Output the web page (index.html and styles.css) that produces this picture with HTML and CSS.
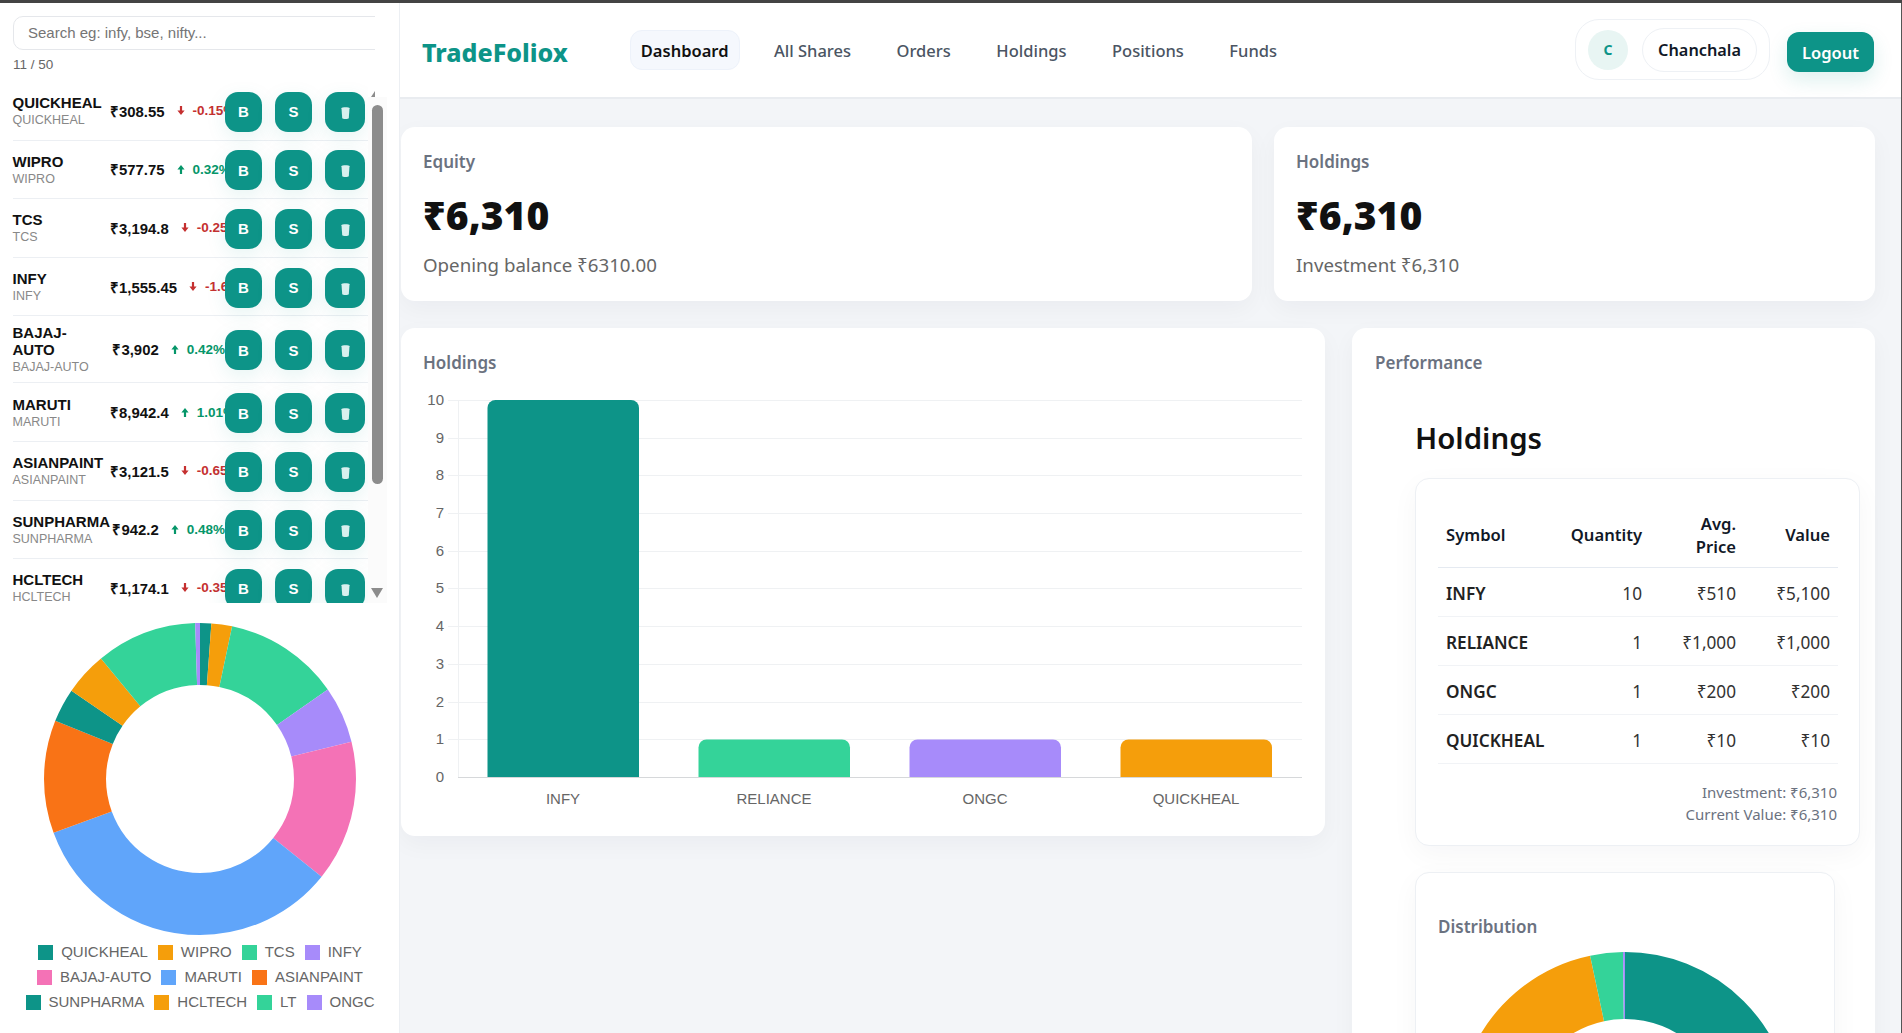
FILE: index.html
```html
<!DOCTYPE html>
<html lang="en">
<head>
    <meta charset="UTF-8">
    <meta name="viewport" content="width=device-width, initial-scale=1.0">
    <title>TradeFoliox</title>
    <link rel="stylesheet" href="styles.css">
</head>
<body>
    <div class="app">
        <aside class="sidebar">
            <div class="search-wrap">
                <input class="search" type="text" placeholder="Search eg: infy, bse, nifty...">
            </div>
            <div class="count">11 / 50</div>

            <div class="watchlist-wrap">
                <div class="watchlist">
                    <div class="stock">
                        <div class="stock-name"><div class="symbol">QUICKHEAL</div><div class="exchange">QUICKHEAL</div></div>
                        <div class="quote"><span class="price">₹308.55</span><span class="change down"><svg class="arrow" viewBox="0 0 8 9"><path d="M4 9 0.4 4.6H2.9V0H5.1V4.6H7.6Z"/></svg>-0.15%</span></div>
                        <div class="actions"><button class="btn">B</button><button class="btn">S</button><button class="btn btn-icon"><svg class="trash" viewBox="0 0 9 13"><path d="M0.5 2.2C0.5 0.8 8.5 0.8 8.5 2.2L7.8 12C7.7 13.3 1.3 13.3 1.2 12Z"/></svg></button></div>
                    </div>
                    <div class="stock">
                        <div class="stock-name"><div class="symbol">WIPRO</div><div class="exchange">WIPRO</div></div>
                        <div class="quote"><span class="price">₹577.75</span><span class="change up"><svg class="arrow" viewBox="0 0 8 9"><path d="M4 0 7.6 4.4H5.1V9H2.9V4.4H0.4Z"/></svg>0.32%</span></div>
                        <div class="actions"><button class="btn">B</button><button class="btn">S</button><button class="btn btn-icon"><svg class="trash" viewBox="0 0 9 13"><path d="M0.5 2.2C0.5 0.8 8.5 0.8 8.5 2.2L7.8 12C7.7 13.3 1.3 13.3 1.2 12Z"/></svg></button></div>
                    </div>
                    <div class="stock">
                        <div class="stock-name"><div class="symbol">TCS</div><div class="exchange">TCS</div></div>
                        <div class="quote"><span class="price">₹3,194.8</span><span class="change down"><svg class="arrow" viewBox="0 0 8 9"><path d="M4 9 0.4 4.6H2.9V0H5.1V4.6H7.6Z"/></svg>-0.25%</span></div>
                        <div class="actions"><button class="btn">B</button><button class="btn">S</button><button class="btn btn-icon"><svg class="trash" viewBox="0 0 9 13"><path d="M0.5 2.2C0.5 0.8 8.5 0.8 8.5 2.2L7.8 12C7.7 13.3 1.3 13.3 1.2 12Z"/></svg></button></div>
                    </div>
                    <div class="stock">
                        <div class="stock-name"><div class="symbol">INFY</div><div class="exchange">INFY</div></div>
                        <div class="quote"><span class="price">₹1,555.45</span><span class="change down"><svg class="arrow" viewBox="0 0 8 9"><path d="M4 9 0.4 4.6H2.9V0H5.1V4.6H7.6Z"/></svg>-1.65%</span></div>
                        <div class="actions"><button class="btn">B</button><button class="btn">S</button><button class="btn btn-icon"><svg class="trash" viewBox="0 0 9 13"><path d="M0.5 2.2C0.5 0.8 8.5 0.8 8.5 2.2L7.8 12C7.7 13.3 1.3 13.3 1.2 12Z"/></svg></button></div>
                    </div>
                    <div class="stock stock-wrapped">
                        <div class="stock-name"><div class="symbol">BAJAJ-AUTO</div><div class="exchange">BAJAJ-AUTO</div></div>
                        <div class="quote"><span class="price">₹3,902</span><span class="change up"><svg class="arrow" viewBox="0 0 8 9"><path d="M4 0 7.6 4.4H5.1V9H2.9V4.4H0.4Z"/></svg>0.42%</span></div>
                        <div class="actions"><button class="btn">B</button><button class="btn">S</button><button class="btn btn-icon"><svg class="trash" viewBox="0 0 9 13"><path d="M0.5 2.2C0.5 0.8 8.5 0.8 8.5 2.2L7.8 12C7.7 13.3 1.3 13.3 1.2 12Z"/></svg></button></div>
                    </div>
                    <div class="stock">
                        <div class="stock-name"><div class="symbol">MARUTI</div><div class="exchange">MARUTI</div></div>
                        <div class="quote"><span class="price">₹8,942.4</span><span class="change up"><svg class="arrow" viewBox="0 0 8 9"><path d="M4 0 7.6 4.4H5.1V9H2.9V4.4H0.4Z"/></svg>1.01%</span></div>
                        <div class="actions"><button class="btn">B</button><button class="btn">S</button><button class="btn btn-icon"><svg class="trash" viewBox="0 0 9 13"><path d="M0.5 2.2C0.5 0.8 8.5 0.8 8.5 2.2L7.8 12C7.7 13.3 1.3 13.3 1.2 12Z"/></svg></button></div>
                    </div>
                    <div class="stock">
                        <div class="stock-name"><div class="symbol">ASIANPAINT</div><div class="exchange">ASIANPAINT</div></div>
                        <div class="quote"><span class="price">₹3,121.5</span><span class="change down"><svg class="arrow" viewBox="0 0 8 9"><path d="M4 9 0.4 4.6H2.9V0H5.1V4.6H7.6Z"/></svg>-0.65%</span></div>
                        <div class="actions"><button class="btn">B</button><button class="btn">S</button><button class="btn btn-icon"><svg class="trash" viewBox="0 0 9 13"><path d="M0.5 2.2C0.5 0.8 8.5 0.8 8.5 2.2L7.8 12C7.7 13.3 1.3 13.3 1.2 12Z"/></svg></button></div>
                    </div>
                    <div class="stock">
                        <div class="stock-name"><div class="symbol">SUNPHARMA</div><div class="exchange">SUNPHARMA</div></div>
                        <div class="quote"><span class="price">₹942.2</span><span class="change up"><svg class="arrow" viewBox="0 0 8 9"><path d="M4 0 7.6 4.4H5.1V9H2.9V4.4H0.4Z"/></svg>0.48%</span></div>
                        <div class="actions"><button class="btn">B</button><button class="btn">S</button><button class="btn btn-icon"><svg class="trash" viewBox="0 0 9 13"><path d="M0.5 2.2C0.5 0.8 8.5 0.8 8.5 2.2L7.8 12C7.7 13.3 1.3 13.3 1.2 12Z"/></svg></button></div>
                    </div>
                    <div class="stock">
                        <div class="stock-name"><div class="symbol">HCLTECH</div><div class="exchange">HCLTECH</div></div>
                        <div class="quote"><span class="price">₹1,174.1</span><span class="change down"><svg class="arrow" viewBox="0 0 8 9"><path d="M4 9 0.4 4.6H2.9V0H5.1V4.6H7.6Z"/></svg>-0.35%</span></div>
                        <div class="actions"><button class="btn">B</button><button class="btn">S</button><button class="btn btn-icon"><svg class="trash" viewBox="0 0 9 13"><path d="M0.5 2.2C0.5 0.8 8.5 0.8 8.5 2.2L7.8 12C7.7 13.3 1.3 13.3 1.2 12Z"/></svg></button></div>
                    </div>
                </div>
                <div class="scrollbar">
                    <span class="scroll-up"></span>
                    <span class="scroll-thumb"></span>
                    <span class="scroll-down"></span>
                </div>
            </div>

            <div class="side-chart">
                <svg class="donut-side" viewBox="0 0 312 312">
                    <g fill="none" stroke-width="62" transform="rotate(-90 156 156)">
                        <circle cx="156" cy="156" r="125" pathLength="360" stroke="#0d9488" stroke-dasharray="4.2 360"/>
                        <circle cx="156" cy="156" r="125" pathLength="360" stroke="#f59e0b" stroke-dasharray="7.7 360" stroke-dashoffset="-4.2"/>
                        <circle cx="156" cy="156" r="125" pathLength="360" stroke="#34d399" stroke-dasharray="43.1 360" stroke-dashoffset="-11.9"/>
                        <circle cx="156" cy="156" r="125" pathLength="360" stroke="#a78bfa" stroke-dasharray="21.2 360" stroke-dashoffset="-55"/>
                        <circle cx="156" cy="156" r="125" pathLength="360" stroke="#f472b6" stroke-dasharray="52.6 360" stroke-dashoffset="-76.2"/>
                        <circle cx="156" cy="156" r="125" pathLength="360" stroke="#60a5fa" stroke-dasharray="121 360" stroke-dashoffset="-128.8"/>
                        <circle cx="156" cy="156" r="125" pathLength="360" stroke="#f97316" stroke-dasharray="42.1 360" stroke-dashoffset="-249.8"/>
                        <circle cx="156" cy="156" r="125" pathLength="360" stroke="#0d9488" stroke-dasharray="12.6 360" stroke-dashoffset="-291.9"/>
                        <circle cx="156" cy="156" r="125" pathLength="360" stroke="#f59e0b" stroke-dasharray="16.1 360" stroke-dashoffset="-304.5"/>
                        <circle cx="156" cy="156" r="125" pathLength="360" stroke="#34d399" stroke-dasharray="37.6 360" stroke-dashoffset="-320.6"/>
                        <circle cx="156" cy="156" r="125" pathLength="360" stroke="#a78bfa" stroke-dasharray="1.8 360" stroke-dashoffset="-358.2"/>
                    </g>
                </svg>
                <div class="legend">
                    <span class="legend-item"><i class="swatch teal"></i>QUICKHEAL</span>
                    <span class="legend-item"><i class="swatch amber"></i>WIPRO</span>
                    <span class="legend-item"><i class="swatch green"></i>TCS</span>
                    <span class="legend-item"><i class="swatch violet"></i>INFY</span>
                    <span class="legend-item"><i class="swatch pink"></i>BAJAJ-AUTO</span>
                    <span class="legend-item"><i class="swatch blue"></i>MARUTI</span>
                    <span class="legend-item"><i class="swatch orange"></i>ASIANPAINT</span>
                    <span class="legend-item"><i class="swatch teal"></i>SUNPHARMA</span>
                    <span class="legend-item"><i class="swatch amber"></i>HCLTECH</span>
                    <span class="legend-item"><i class="swatch green"></i>LT</span>
                    <span class="legend-item"><i class="swatch violet"></i>ONGC</span>
                </div>
            </div>
        </aside>

        <div class="content">
            <header class="topbar">
                <div class="logo">TradeFoliox</div>
                <nav class="nav">
                    <a class="nav-link active">Dashboard</a>
                    <a class="nav-link">All Shares</a>
                    <a class="nav-link">Orders</a>
                    <a class="nav-link">Holdings</a>
                    <a class="nav-link">Positions</a>
                    <a class="nav-link">Funds</a>
                </nav>
                <div class="user">
                    <div class="user-pill">
                        <div class="avatar">C</div>
                        <div class="user-name">Chanchala</div>
                    </div>
                    <button class="logout">Logout</button>
                </div>
            </header>

            <main class="main">
                <div class="summary-row">
                    <section class="card stat">
                        <div class="card-title">Equity</div>
                        <div class="stat-value">₹6,310</div>
                        <div class="stat-sub">Opening balance ₹6310.00</div>
                    </section>
                    <section class="card stat">
                        <div class="card-title">Holdings</div>
                        <div class="stat-value">₹6,310</div>
                        <div class="stat-sub">Investment ₹6,310</div>
                    </section>
                </div>

                <div class="detail-row">
                    <section class="card chart-card">
                        <div class="card-title">Holdings</div>
                        <svg class="bar-chart" viewBox="0 0 877 422">
                            <g class="grid">
                                <line x1="23" x2="877" y1="8.5" y2="8.5"/>
                                <line x1="23" x2="877" y1="46.5" y2="46.5"/>
                                <line x1="23" x2="877" y1="83.5" y2="83.5"/>
                                <line x1="23" x2="877" y1="121.5" y2="121.5"/>
                                <line x1="23" x2="877" y1="159.5" y2="159.5"/>
                                <line x1="23" x2="877" y1="196.5" y2="196.5"/>
                                <line x1="23" x2="877" y1="234.5" y2="234.5"/>
                                <line x1="23" x2="877" y1="272.5" y2="272.5"/>
                                <line x1="23" x2="877" y1="310.5" y2="310.5"/>
                                <line x1="23" x2="877" y1="347.5" y2="347.5"/>
                                <line x1="33.5" x2="33.5" y1="8" y2="385"/>
                            </g>
                            <g class="axis-label">
                                <text x="19" y="12.5" text-anchor="end">10</text>
                                <text x="19" y="50.5" text-anchor="end">9</text>
                                <text x="19" y="87.5" text-anchor="end">8</text>
                                <text x="19" y="125.5" text-anchor="end">7</text>
                                <text x="19" y="163.5" text-anchor="end">6</text>
                                <text x="19" y="200.5" text-anchor="end">5</text>
                                <text x="19" y="238.5" text-anchor="end">4</text>
                                <text x="19" y="276.5" text-anchor="end">3</text>
                                <text x="19" y="314.5" text-anchor="end">2</text>
                                <text x="19" y="351.5" text-anchor="end">1</text>
                                <text x="19" y="389.5" text-anchor="end">0</text>
                            </g>
                            <path fill="#0d9488" d="M62.5 385V16a8 8 0 0 1 8-8H206a8 8 0 0 1 8 8V385Z"/>
                            <path fill="#34d399" d="M273.5 385V355.5a8 8 0 0 1 8-8H417a8 8 0 0 1 8 8V385Z"/>
                            <path fill="#a78bfa" d="M484.5 385V355.5a8 8 0 0 1 8-8H628a8 8 0 0 1 8 8V385Z"/>
                            <path fill="#f59e0b" d="M695.5 385V355.5a8 8 0 0 1 8-8H839a8 8 0 0 1 8 8V385Z"/>
                            <line class="baseline" x1="33" x2="877" y1="385.5" y2="385.5"/>
                            <g class="axis-label">
                                <text x="138" y="412" text-anchor="middle">INFY</text>
                                <text x="349" y="412" text-anchor="middle">RELIANCE</text>
                                <text x="560" y="412" text-anchor="middle">ONGC</text>
                                <text x="771" y="412" text-anchor="middle">QUICKHEAL</text>
                            </g>
                        </svg>
                    </section>

                    <section class="card perf-card">
                        <div class="card-title">Performance</div>
                        <h2 class="perf-heading">Holdings</h2>
                        <div class="inner-card table-card">
                            <table class="holdings-table">
                                <thead>
                                    <tr>
                                        <th class="col-symbol">Symbol</th>
                                        <th class="col-qty">Quantity</th>
                                        <th class="col-price">Avg.<br>Price</th>
                                        <th class="col-price">Value</th>
                                    </tr>
                                </thead>
                                <tbody>
                                    <tr><td>INFY</td><td>10</td><td>₹510</td><td>₹5,100</td></tr>
                                    <tr><td>RELIANCE</td><td>1</td><td>₹1,000</td><td>₹1,000</td></tr>
                                    <tr><td>ONGC</td><td>1</td><td>₹200</td><td>₹200</td></tr>
                                    <tr><td>QUICKHEAL</td><td>1</td><td>₹10</td><td>₹10</td></tr>
                                </tbody>
                            </table>
                            <div class="table-foot">
                                <div>Investment: ₹6,310</div>
                                <div>Current Value: ₹6,310</div>
                            </div>
                        </div>
                        <div class="inner-card dist-card">
                            <div class="card-title">Distribution</div>
                            <svg class="donut-dist" viewBox="0 0 336 336">
                                <g fill="none" stroke-width="67" transform="rotate(-90 168 168)">
                                    <circle cx="168" cy="168" r="134.5" pathLength="360" stroke="#0d9488" stroke-dasharray="291 360"/>
                                    <circle cx="168" cy="168" r="134.5" pathLength="360" stroke="#f59e0b" stroke-dasharray="57 360" stroke-dashoffset="-291"/>
                                    <circle cx="168" cy="168" r="134.5" pathLength="360" stroke="#34d399" stroke-dasharray="11.3 360" stroke-dashoffset="-348"/>
                                    <circle cx="168" cy="168" r="134.5" pathLength="360" stroke="#a78bfa" stroke-dasharray="0.7 360" stroke-dashoffset="-359.3"/>
                                </g>
                            </svg>
                        </div>
                    </section>
                </div>
            </main>
        </div>
    </div>
</body>
</html>
```

FILE: styles.css
```css
* {
    box-sizing: border-box;
}
html, body {
    height: 100%;
}
body {
    margin: 0;
    overflow: hidden;
    border-top: 3px solid #444;
    font-family: "Noto Sans", sans-serif;
    color: #111;
    background: #fff;
}
.app {
    display: flex;
    height: 100%;
}

/* sidebar */
.sidebar {
    width: 400px;
    flex-shrink: 0;
    background: #fff;
    border-right: 1px solid #eceff3;
    font-family: "Liberation Sans", Arial, sans-serif;
    overflow: hidden;
}
.search-wrap {
    margin: 13px 0 0 13px;
    width: 362px;
    overflow: hidden;
}
.search {
    display: block;
    width: 400px;
    height: 34px;
    padding: 0 14px 2px;
    border: 1px solid #e5e7eb;
    border-radius: 10px;
    font-family: "Liberation Sans", Arial, sans-serif;
    font-size: 15px;
    outline: none;
}
.search::placeholder {
    color: #757575;
}
.count {
    margin: 6px 0 0 13px;
    height: 17px;
    font-size: 13.5px;
    line-height: 17px;
    color: #666;
}
.watchlist-wrap {
    position: relative;
    margin-top: 9px;
    height: 521px;
}
.watchlist {
    height: 100%;
    width: 368px;
    padding-left: 12.5px;
    overflow: hidden;
}
.stock {
    position: relative;
    display: flex;
    align-items: center;
    min-height: 58.6px;
    padding: 5px 0;
    border-bottom: 1px solid #eceff3;
}
.stock-wrapped {
    padding: 6px 0;
}
.stock-name {
    width: 97.5px;
    flex-shrink: 0;
    padding-top: 2px;
}
.stock-wrapped .symbol {
    width: 70px;
}
.symbol {
    font-size: 15px;
    line-height: 17px;
    font-weight: 700;
    color: #111;
}
.exchange {
    margin-top: 1px;
    font-size: 12.5px;
    line-height: 17px;
    color: #888;
    white-space: nowrap;
}
.quote {
    display: flex;
    align-items: center;
    justify-content: safe flex-end;
    width: 115px;
    gap: 12px;
    white-space: nowrap;
}
.price {
    font-size: 14.9px;
    font-weight: 700;
    color: #111;
}
.change {
    display: inline-flex;
    align-items: center;
    gap: 8px;
    font-size: 13.5px;
    font-weight: 700;
}
.change.up {
    color: #059669;
}
.change.down {
    color: #c53030;
}
.arrow {
    width: 8px;
    height: 9px;
    fill: currentColor;
}
.actions {
    position: absolute;
    top: 50%;
    right: 3px;
    margin-top: -19px;
    display: flex;
    gap: 13px;
}
.btn {
    width: 37px;
    height: 40px;
    padding: 0;
    border: none;
    border-radius: 13px;
    background: #0d9488;
    color: #fff;
    font-family: "Liberation Sans", Arial, sans-serif;
    font-size: 15px;
    font-weight: 700;
    box-shadow: 0 6px 20px rgba(13, 148, 136, 0.1);
}
.btn-icon {
    width: 40px;
}
.trash {
    display: block;
    width: 9px;
    height: 13px;
    margin: 1px auto 0;
    fill: #d8f0ee;
}
.scrollbar {
    position: absolute;
    top: 15px;
    left: 368px;
    width: 19px;
    bottom: 0;
    background: #fbfbfb;
}
.scroll-up {
    position: absolute;
    top: -6px;
    left: 3px;
    border-left: 4px solid transparent;
    border-bottom: 6px solid #8c8c8c;
}
.scroll-thumb {
    position: absolute;
    top: 8px;
    left: 4px;
    width: 11px;
    height: 379px;
    border-radius: 6px;
    background: #8c8c8c;
}
.scroll-down {
    position: absolute;
    bottom: 5px;
    left: 3px;
    border-style: solid;
    border-width: 10px 6.5px 0;
    border-color: #8c8c8c transparent transparent;
}
.side-chart {
    margin-top: 20px;
    display: flex;
    flex-direction: column;
    align-items: center;
    width: 399px;
}
.donut-side {
    display: block;
    width: 312px;
    height: 312px;
}
.legend {
    display: flex;
    flex-wrap: wrap;
    justify-content: center;
    gap: 7px 10px;
    width: 360px;
    margin: 8px 0 0 1px;
    font-size: 15px;
    line-height: 18px;
    color: #666;
}
.legend-item {
    display: flex;
    align-items: center;
    gap: 8px;
    white-space: nowrap;
}
.swatch {
    width: 15px;
    height: 15px;
}
.teal { background: #0d9488; }
.amber { background: #f59e0b; }
.green { background: #34d399; }
.violet { background: #a78bfa; }
.pink { background: #f472b6; }
.blue { background: #60a5fa; }
.orange { background: #f97316; }

/* header */
.content {
    flex: 1;
    min-width: 0;
    display: flex;
    flex-direction: column;
    background: #f3f5f8;
    border-right: 1px solid #555;
}
.topbar {
    display: flex;
    align-items: center;
    height: 96px;
    flex-shrink: 0;
    padding: 0 27px 0 22px;
    background: #fff;
    border-bottom: 2px solid #e9ecf0;
}
.logo {
    font-size: 25px;
    font-weight: 800;
    color: #0d9488;
    margin-right: 62px;
    margin-top: 3px;
}
.nav {
    display: flex;
    align-items: center;
    gap: 23.5px;
}
.nav-link {
    height: 40px;
    padding: 1px 10px 0;
    border: 1px solid transparent;
    border-radius: 12px;
    font-size: 16.5px;
    font-weight: 500;
    line-height: 38px;
    color: #4b5563;
}
.nav-link.active {
    font-weight: 600;
    color: #111;
    background: #f5f8fd;
    border-color: #edf2fa;
}
.user {
    display: flex;
    align-items: center;
    gap: 17px;
    margin-left: auto;
}
.user-pill {
    display: flex;
    align-items: center;
    gap: 14px;
    height: 61px;
    margin-top: -1px;
    padding: 0 12px 0 12px;
    border: 1px solid #eef1f5;
    border-radius: 24px;
}
.avatar {
    width: 40px;
    height: 40px;
    border-radius: 50%;
    background: #e8f5f3;
    color: #0d9488;
    font-size: 14px;
    font-weight: 700;
    line-height: 40px;
    text-align: center;
}
.user-name {
    height: 44px;
    padding: 0 15px;
    border: 1px solid #eef1f5;
    border-radius: 22px;
    font-size: 16.3px;
    font-weight: 600;
    line-height: 42px;
    color: #111827;
}
.logout {
    width: 87px;
    height: 40px;
    margin-top: 4px;
    border: none;
    border-radius: 12px;
    background: #0d9488;
    color: #fff;
    font-family: "Noto Sans", sans-serif;
    font-size: 16.5px;
    font-weight: 600;
    box-shadow: 0 8px 20px rgba(13, 148, 136, 0.14);
}

/* main */
.main {
    flex: 1;
    min-height: 0;
    overflow: hidden;
    padding: 28px 26px 0 1px;
}
.card {
    background: #fff;
    border-radius: 14px;
    box-shadow: 0 8px 24px rgba(17, 24, 39, 0.04);
}
.card-title {
    font-size: 17px;
    font-weight: 600;
    line-height: 24px;
    color: #6b7280;
}
.summary-row {
    display: grid;
    grid-template-columns: 851px 601px;
    gap: 22px;
}
.stat {
    height: 174px;
    padding: 23px 22px;
}
.stat-value {
    margin-top: 14px;
    font-size: 39px;
    font-weight: 900;
    line-height: 54px;
    color: #111;
}
.stat-sub {
    margin-top: 11px;
    font-size: 18.7px;
    line-height: 24px;
    color: #666;
}
.detail-row {
    display: grid;
    grid-template-columns: 924px 523px;
    gap: 27px;
    margin-top: 27px;
    align-items: start;
}
.chart-card {
    height: 508px;
    padding: 23px 23px 23px 24px;
}
.chart-card .card-title {
    margin-left: -2px;
}
.bar-chart {
    display: block;
    width: 877px;
    height: 422px;
    margin-top: 17px;
}
.grid line {
    stroke: #eff1f3;
    stroke-width: 1;
}
.baseline {
    stroke: #d6d8da;
    stroke-width: 1;
}
.axis-label text {
    font-family: "Liberation Sans", Arial, sans-serif;
    font-size: 15px;
    fill: #666;
}
.perf-card {
    height: 720px;
    padding: 23px;
}
.perf-heading {
    margin: 44px 0 0 40px;
    font-size: 29.4px;
    font-weight: 600;
    line-height: 38px;
    color: #111;
}
.inner-card {
    margin: 21px 0 0 40px;
    background: #fff;
    border: 1px solid #edf0f4;
    border-radius: 14px;
    box-shadow: 0 8px 28px rgba(17, 24, 39, 0.04);
}
.table-card {
    width: 445px;
    height: 368px;
    padding: 20px 22px 0;
}
.holdings-table {
    width: 400px;
    table-layout: fixed;
    border-collapse: collapse;
    font-size: 17.2px;
}
.holdings-table th, .holdings-table td {
    padding: 14px 8px 10px;
    line-height: 24px;
    text-align: right;
}
.holdings-table th {
    padding: 14px 8px 9px;
    font-size: 16.6px;
    line-height: 22.5px;
    font-weight: 600;
    color: #111827;
    border-bottom: 1px solid #e5eaf1;
}
.holdings-table td {
    color: #333;
    border-bottom: 1px solid #f1f3f6;
}
.holdings-table th:first-child, .holdings-table td:first-child {
    text-align: left;
}
.holdings-table td:first-child {
    font-weight: 600;
    color: #222;
}
.col-symbol { width: 124px; }
.col-qty { width: 88px; }
.col-price { width: 94px; }
.table-foot {
    margin-top: 17px;
    font-size: 15px;
    line-height: 22px;
    color: #6b7280;
    text-align: right;
}
.dist-card {
    width: 420px;
    margin-top: 26px;
    padding: 42px 22px 0;
}
.donut-dist {
    display: block;
    width: 336px;
    height: 336px;
    margin: 13px auto 0;
}
```
